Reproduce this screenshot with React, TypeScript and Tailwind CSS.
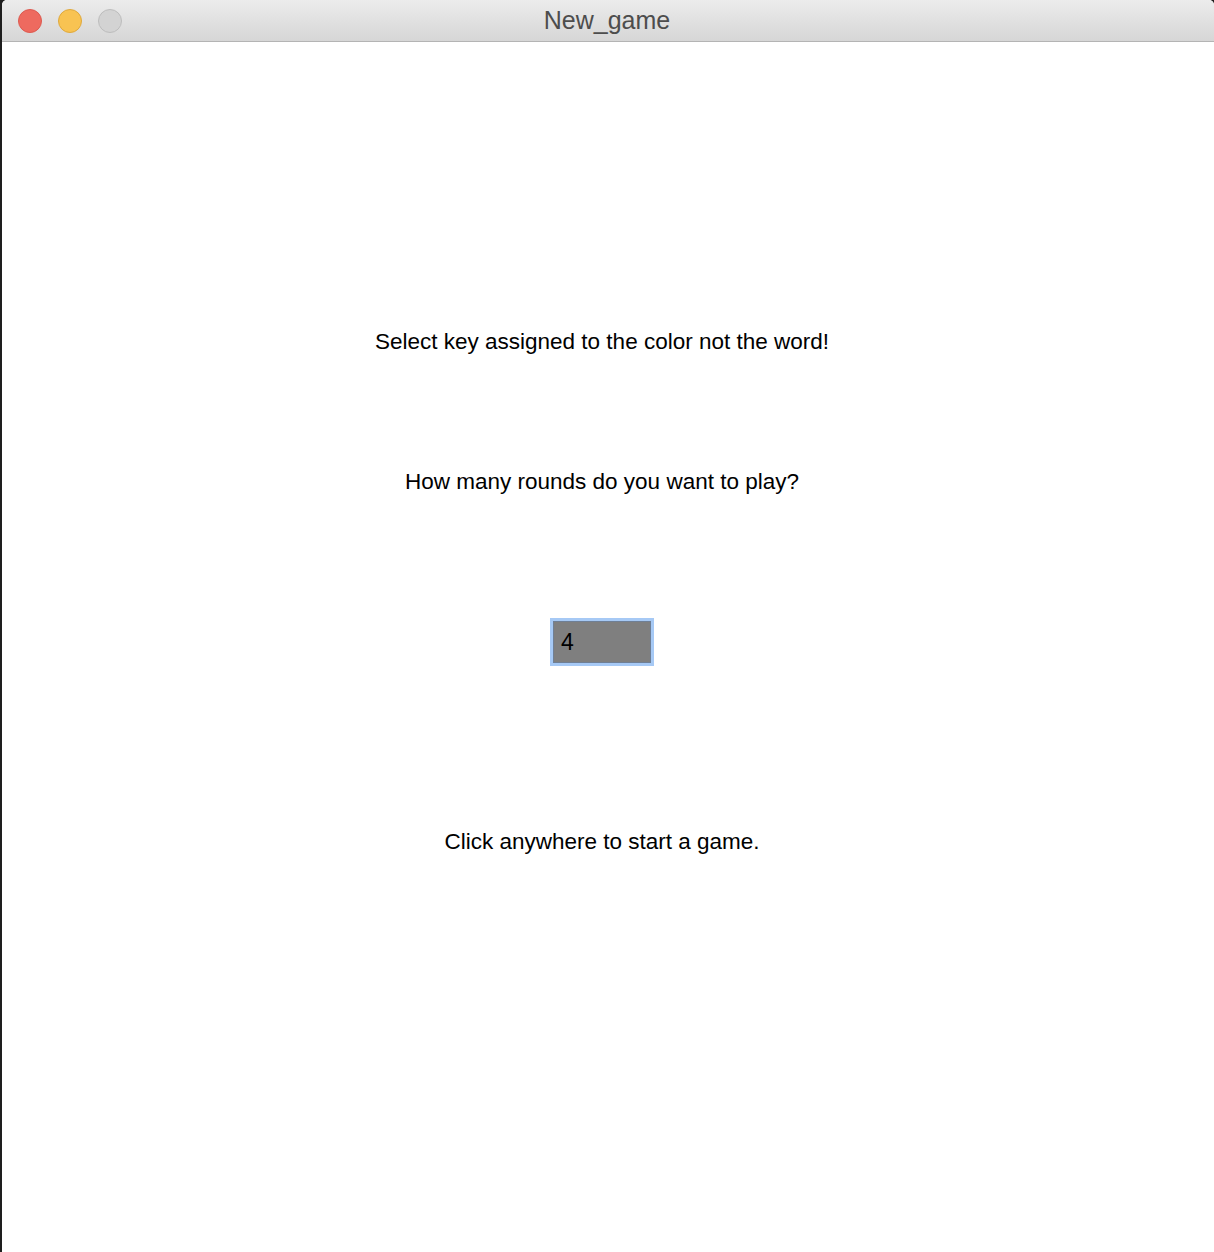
export default function App() {
    return (
        <div className="flex h-[1252px] w-[1214px] bg-[#1e1e1e] font-['Liberation_Sans',Arial,sans-serif]">
            {/* sliver of whatever sits behind the window */}
            <div className="w-[2px] shrink-0" />
            <div className="flex flex-1 flex-col overflow-hidden rounded-t-[5px] bg-white">
                <div className="relative flex h-[42px] shrink-0 items-center border-b border-[#b4b4b4] bg-gradient-to-b from-[#ececec] to-[#d6d6d6]">
                    <div className="flex items-center gap-[16px] pl-[16px]">
                        <span className="h-[24px] w-[24px] rounded-full border border-[#dd5a50] bg-[#ee6a5f]" />
                        <span className="h-[24px] w-[24px] rounded-full border border-[#dfa93d] bg-[#f8c352]" />
                        <span className="h-[24px] w-[24px] rounded-full border border-[#bdbdbd] bg-[#d3d3d3]" />
                    </div>
                    <div className="absolute inset-0 flex items-center justify-center pr-[2px] text-[25px] text-[#4d4d4d]">
                        New_game
                    </div>
                </div>
                <div className="flex flex-1 flex-col items-center pr-[12px] text-[22.5px] text-black">
                    <p className="mt-[287px] leading-[26px]">Select key assigned to the color not the word!</p>
                    <p className="mt-[114px] leading-[26px]">How many rounds do you want to play?</p>
                    <div className="mt-[123px] h-[48px] w-[104px] border-[3px] border-[#a6c9f5]">
                        <div className="flex h-full w-full items-center border border-[#6f7f95] bg-[#7f7f7f] pl-[7px] text-[23px] text-black">
                            4
                        </div>
                    </div>
                    <p className="mt-[163px] leading-[26px]">Click anywhere to start a game.</p>
                </div>
            </div>
        </div>
    );
}
